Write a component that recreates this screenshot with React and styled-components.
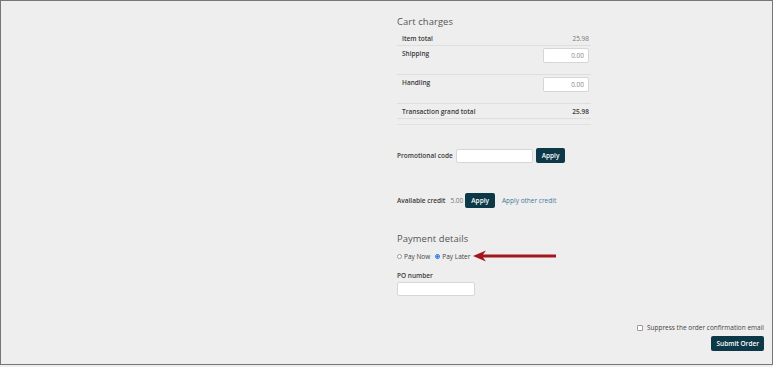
import React from 'react'
import styled, { createGlobalStyle } from 'styled-components'

const GlobalStyle = createGlobalStyle`
  html, body {
    margin: 0;
    background: #efefef;
    font-family: "Open Sans", "Liberation Sans", sans-serif;
  }
`

const Frame = styled.div`
  box-sizing: border-box;
  height: 365px;
  border: 1px solid #767676;
  background: #eeeeee;
  display: flex;
  flex-direction: column;
`

const Column = styled.div`
  width: 194px;
  margin-left: 396px;
  padding-top: 14px;
`

const Heading = styled.h2`
  margin: ${p => p.$top || 0}px 0 0;
  font-size: 9.4px;
  line-height: 13px;
  font-weight: 400;
  color: #555;
  letter-spacing: 0.1px;
`

const Table = styled.div`
  margin-top: 3px;
  padding-bottom: 5px;
  border-bottom: 1px solid #e2e2e2;
`

const Row = styled.div`
  box-sizing: border-box;
  display: flex;
  justify-content: space-between;
  align-items: flex-start;
  height: ${p => (p.$tall ? 29 : 15)}px;
  padding: ${p => (p.$tall ? '2px 2px 0 5px' : '3px 2px 0 5px')};
  border-bottom: 1px solid #dedede;
`

const Label = styled.span`
  font-size: 6.5px;
  line-height: 9px;
  font-weight: 600;
  color: #3a3a3a;
  padding-top: ${p => (p.$drop ? 1 : 0)}px;
`

const Value = styled.span`
  font-size: 6.5px;
  line-height: 9px;
  color: ${p => (p.$strong ? '#3a3a3a' : '#777')};
  font-weight: ${p => (p.$strong ? 600 : 400)};
  margin: 0 ${p => p.$mr || 0}px 0 ${p => p.$ml || 0}px;
`

const Field = styled.input`
  display: block;
  box-sizing: border-box;
  width: ${p => p.$w}px;
  height: ${p => p.$h}px;
  margin: ${p => p.$top || 0}px 0 0;
  padding: 0 4px;
  border: 1px solid #d6d6d6;
  border-radius: 2px;
  background: #fff;
  font: 6.5px "Open Sans", sans-serif;
  color: #888;
  text-align: right;
  outline: none;
`

const Line = styled.div`
  display: flex;
  align-items: center;
  gap: ${p => p.$gap || 0}px;
  margin-top: ${p => p.$top}px;
`

const Button = styled.button`
  box-sizing: border-box;
  height: 15px;
  padding: 0 ${p => p.$px || 6}px;
  border: none;
  border-radius: 2px;
  background: #0c3848;
  color: #fff;
  font: 600 6.5px "Open Sans", sans-serif;
  cursor: pointer;
`

const Link = styled.a`
  font-size: 6.5px;
  color: #3d7a9a;
  margin-left: 7px;
  text-decoration: none;
`

const Radio = styled.input.attrs({ type: 'radio' })`
  appearance: none;
  box-sizing: border-box;
  width: 5px;
  height: 5px;
  margin: 0 2px 0 0;
  border: 1px solid #9a9a9a;
  border-radius: 50%;
  background: #fff;
  &:checked {
    border-color: #1a73e8;
    background: radial-gradient(circle, #1a73e8 45%, #fff 55%);
  }
`

const Choice = styled.label`
  display: flex;
  align-items: center;
  font-size: 6.5px;
  color: #444;
  margin-right: ${p => p.$mr || 0}px;
`

const SmallTitle = styled.div`
  margin-top: 9px;
  font-size: 6.5px;
  line-height: 9px;
  font-weight: 600;
  color: #3a3a3a;
`

const Footer = styled.div`
  margin-top: 27px;
  padding-right: 8px;
  display: flex;
  flex-direction: column;
  align-items: flex-end;
  gap: 4px;
`

const Check = styled.input.attrs({ type: 'checkbox' })`
  appearance: none;
  box-sizing: border-box;
  width: 6px;
  height: 6px;
  margin: 0 4px 0 0;
  border: 1px solid #9a9a9a;
  border-radius: 1px;
  background: #fff;
`

const Arrow = () => (
  <svg width="84" height="12" viewBox="0 0 84 12" style={{ marginLeft: 3 }}>
    <path d="M0 6 L13 0.5 L10 4.6 L83 4.6 L83 7.4 L10 7.4 L13 11.5 Z" fill="#a2161c" />
  </svg>
)

export default function App() {
  return (
    <>
      <GlobalStyle />
      <Frame>
        <Column>
          <Heading>Cart charges</Heading>
          <Table>
            <Row>
              <Label>Item total</Label>
              <Value>25.98</Value>
            </Row>
            <Row $tall>
              <Label $drop>Shipping</Label>
              <Field $w={46} $h={15} defaultValue="0.00" />
            </Row>
            <Row $tall>
              <Label $drop>Handling</Label>
              <Field $w={46} $h={15} defaultValue="0.00" />
            </Row>
            <Row>
              <Label>Transaction grand total</Label>
              <Value $strong>25.98</Value>
            </Row>
          </Table>

          <Line $top={23} $gap={3}>
            <Label>Promotional code</Label>
            <Field $w={77} $h={14} />
            <Button>Apply</Button>
          </Line>

          <Line $top={30}>
            <Label>Available credit</Label>
            <Value $ml={5} $mr={2}>5.00</Value>
            <Button>Apply</Button>
            <Link href="#">Apply other credit</Link>
          </Line>

          <Heading $top={24}>Payment details</Heading>
          <Line $top={5}>
            <Choice $mr={5}>
              <Radio name="pay" />
              Pay Now
            </Choice>
            <Choice>
              <Radio name="pay" defaultChecked />
              Pay Later
            </Choice>
            <Arrow />
          </Line>
          <SmallTitle>PO number</SmallTitle>
          <Field $w={78} $h={14} $top={2} />
        </Column>

        <Footer>
          <Choice>
            <Check />
            Suppress the order confirmation email
          </Choice>
          <Button $px={5}>Submit Order</Button>
        </Footer>
      </Frame>
    </>
  )
}
